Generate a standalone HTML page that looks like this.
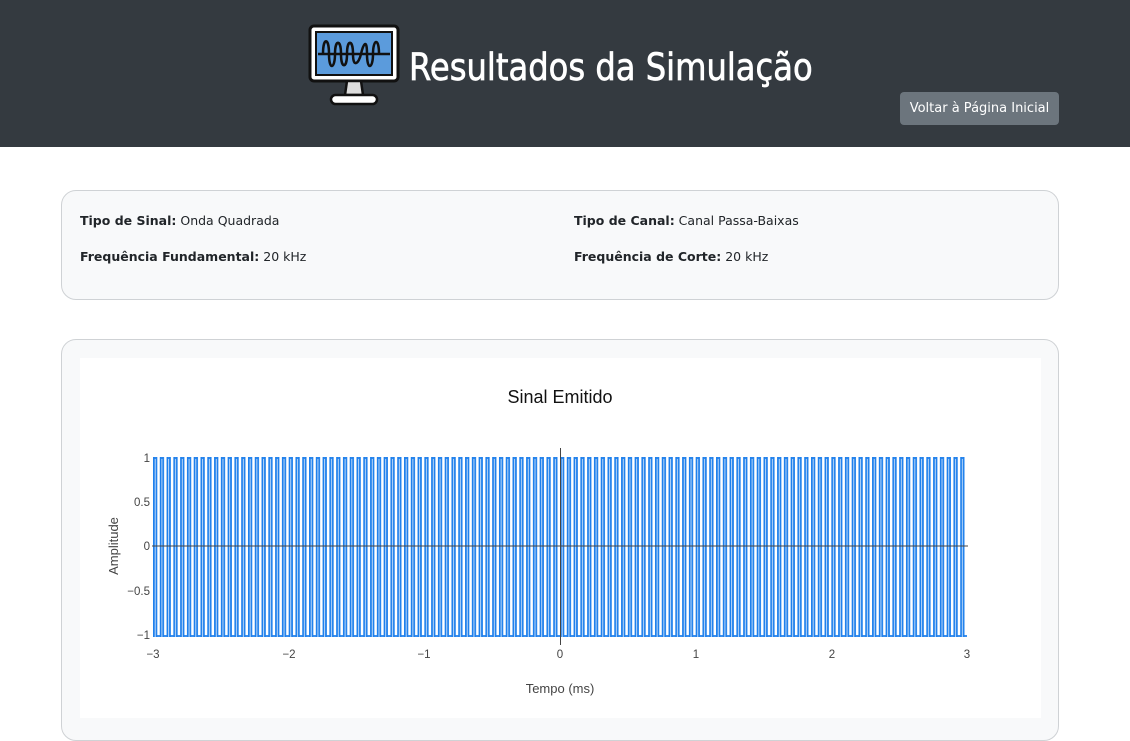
<!DOCTYPE html>
<html><head><meta charset="utf-8"><style>
body{margin:0;width:1130px;height:737px;overflow:hidden;background:#fff;font-family:"Liberation Sans","DejaVu Sans",sans-serif;}
.hdr{position:absolute;left:0;top:0;width:1130px;height:147px;background:#343a40;}
.title{position:absolute;left:409px;top:46px;color:#fff;font-size:37px;font-family:"DejaVu Sans",sans-serif;transform-origin:0 0;transform:scaleX(0.87);white-space:nowrap;-webkit-text-stroke:0.7px #fff}
.btn{position:absolute;left:900px;top:92px;width:159px;height:33px;background:#6c757d;border-radius:4px;color:#fff;font-size:13px;line-height:33px;text-align:center;font-family:"DejaVu Sans",sans-serif;}
.card{position:absolute;left:61px;width:996px;background:#f8f9fa;border:1px solid #cfd2d5;border-radius:15px;}
.info{position:absolute;font-size:12.5px;color:#212529;font-family:"DejaVu Sans",sans-serif;}
.info b{font-weight:bold}
</style></head><body>
<div class="hdr">
<svg style="position:absolute;left:307px;top:23px" width="94" height="86" viewBox="0 0 94 86">
<rect x="3" y="3" width="88" height="55" rx="4" fill="#fff" stroke="#111" stroke-width="3"/>
<rect x="9" y="9" width="76" height="43" fill="#5b9bdc" stroke="#111" stroke-width="2"/>
<line x1="11" y1="31" x2="83" y2="31" stroke="#111" stroke-width="2.5"/>
<path d="M16 31 C16 14 22 14 22 31 S28 46 28 31 S34 16 34 31 S40 46 40 31 S46 16 46 31 S52 40 54 31 S60 14 60 31 S66 46 66 31 S72 14 72 31" fill="none" stroke="#111" stroke-width="2.5"/>
<path d="M40 58 L38 72 H56 L54 58Z" fill="#ddd" stroke="#111" stroke-width="2.5"/>
<rect x="24" y="72" width="46" height="9" rx="4.5" fill="#fff" stroke="#111" stroke-width="2.5"/>
</svg>
<div class="title">Resultados da Simulação</div>
<div class="btn">Voltar à Página Inicial</div>
</div>
<div class="card" style="top:190px;height:108px">
<div class="info" style="left:18px;top:22px"><b>Tipo de Sinal:</b> Onda Quadrada</div>
<div class="info" style="left:512px;top:22px"><b>Tipo de Canal:</b> Canal Passa-Baixas</div>
<div class="info" style="left:18px;top:58px"><b>Frequência Fundamental:</b> 20 kHz</div>
<div class="info" style="left:512px;top:58px"><b>Frequência de Corte:</b> 20 kHz</div>
</div>
<div class="card" style="top:339px;height:400px"></div>
<svg style="position:absolute;left:80px;top:358px" width="961" height="360" viewBox="80 358 961 360" font-family="Liberation Sans, sans-serif">
<defs><pattern id="sq" patternUnits="userSpaceOnUse" x="153" y="457" width="6.7833" height="180">
<path d="M0.9 0 V180 M3.39 0 V180 M0 1 H3.39 M3.39 179 H6.78" stroke="#1f80ec" stroke-width="1.8" fill="none"/>
</pattern></defs>
<rect x="80" y="358" width="961" height="360" fill="#fff"/>
<rect x="153" y="457" width="814" height="180" fill="url(#sq)"/>
<line x1="152" y1="546" x2="968" y2="546" stroke="#444" stroke-width="1"/>
<line x1="560.5" y1="448" x2="560.5" y2="645" stroke="#444" stroke-width="1"/>
<text x="560" y="403" font-size="18" text-anchor="middle" fill="#111">Sinal Emitido</text>
<g font-size="11.5" fill="#444" text-anchor="end">
<text x="150" y="462">1</text><text x="150" y="506">0.5</text><text x="150" y="550">0</text><text x="150" y="595">−0.5</text><text x="150" y="639">−1</text></g>
<g font-size="11.5" fill="#444" text-anchor="middle">
<text x="153" y="658">−3</text><text x="289" y="658">−2</text><text x="424" y="658">−1</text><text x="560" y="658">0</text><text x="696" y="658">1</text><text x="832" y="658">2</text><text x="967" y="658">3</text></g>
<text x="560" y="693" font-size="13" fill="#444" text-anchor="middle">Tempo (ms)</text>
<text transform="translate(118,546) rotate(-90)" font-size="13" fill="#444" text-anchor="middle">Amplitude</text>
</svg>
</body></html>
